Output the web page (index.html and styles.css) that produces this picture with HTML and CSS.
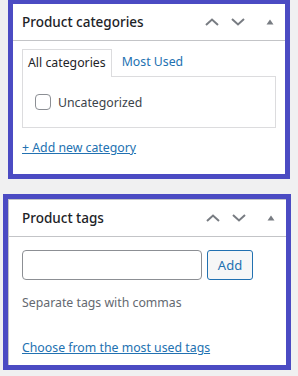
FILE: index.html
```html
<!DOCTYPE html>
<html lang="en">
<head>
  <meta charset="UTF-8" />
  <title>Product boxes</title>
  <link rel="stylesheet" href="styles.css">
</head>
<body>
  <div class="postbox box-categories">
    <div class="postbox-header">
      <h2>Product categories</h2>
      <div class="handle-actions">
        <svg class="icon" width="14" height="8" viewBox="0 0 14 8"><path d="M1 7 L7 1.5 L13 7" fill="none" stroke="#787c82" stroke-width="2"/></svg>
        <svg class="icon" width="14" height="8" viewBox="0 0 14 8"><path d="M1 1 L7 6.5 L13 1" fill="none" stroke="#787c82" stroke-width="2"/></svg>
        <svg class="icon toggle" width="8" height="6" viewBox="0 0 8 6"><path d="M0.5 5.5 L4 0.5 L7.5 5.5 Z" fill="#787c82"/></svg>
      </div>
    </div>
    <div class="inside">
      <ul class="category-tabs">
        <li class="tab active">All categories</li>
        <li class="tab"><a href="#">Most Used</a></li>
      </ul>
      <div class="tabs-panel">
        <label class="cat-item"><span class="checkbox"></span>Uncategorized</label>
      </div>
      <a class="add-link" href="#">+ Add new category</a>
    </div>
  </div>

  <div class="postbox box-tags">
    <div class="box-inner">
      <div class="postbox-header">
        <h2>Product tags</h2>
        <div class="handle-actions">
          <svg class="icon" width="14" height="8" viewBox="0 0 14 8"><path d="M1 7 L7 1.5 L13 7" fill="none" stroke="#787c82" stroke-width="2"/></svg>
          <svg class="icon" width="14" height="8" viewBox="0 0 14 8"><path d="M1 1 L7 6.5 L13 1" fill="none" stroke="#787c82" stroke-width="2"/></svg>
          <svg class="icon toggle" width="8" height="6" viewBox="0 0 8 6"><path d="M0.5 5.5 L4 0.5 L7.5 5.5 Z" fill="#787c82"/></svg>
        </div>
      </div>
      <div class="inside">
        <div class="tag-form">
          <input type="text" class="tag-input">
          <button class="tag-add">Add</button>
        </div>
        <p class="howto">Separate tags with commas</p>
        <a class="add-link" href="#">Choose from the most used tags</a>
      </div>
    </div>
  </div>
</body>
</html>
```

FILE: styles.css
```css
body {
  margin: 0;
  background: #f0f0f1;
  font-family: "Noto Sans", "Open Sans", sans-serif;
  font-size: 12.3px;
  color: #1d2327;
}
.postbox {
  background: #fff;
  border: 5px solid #4b4bc3;
  box-sizing: border-box;
}
.box-categories {
  width: 282px;
  margin: -1px 0 0 8px;
}
.box-tags {
  width: 288px;
  margin: 15px 0 0 3px;
}
.box-inner {
  border-top: 1px solid #c3c4c7;
  border-left: 1px solid #c3c4c7;
}
.postbox-header {
  display: flex;
  align-items: center;
  justify-content: space-between;
  height: 36px;
  border-bottom: 1px solid #c3c4c7;
  padding: 0 0 0 9px;
}
.box-tags .postbox-header {
  padding-left: 13px;
}
.postbox-header h2 {
  margin: 0;
  font-size: 13.5px;
  font-weight: 500;
  color: #1d2327;
}
.handle-actions {
  display: flex;
  align-items: center;
  gap: 12px;
  padding-right: 11px;
}
.icon {
  display: block;
}
.handle-actions .toggle {
  margin-left: 9px;
}
.inside {
  padding: 8px 9px 16px 9px;
}
.box-tags .inside {
  padding: 13px 13px 7px 13px;
}
.category-tabs {
  display: flex;
  list-style: none;
  margin: 0 0 -1px 0;
  padding: 0;
  height: 28px;
}
.tab {
  padding: 0 5px;
  line-height: 26px;
}
.tab a {
  color: #2271b1;
  text-decoration: none;
}
.tab.active {
  background: #fff;
  border: 1px solid #dcdcde;
  border-bottom: none;
  margin-right: 5px;
  position: relative;
  z-index: 1;
}
.tabs-panel {
  height: 52px;
  box-sizing: border-box;
  border: 1px solid #dcdcde;
  padding: 0 12px;
  display: flex;
  align-items: center;
}
.cat-item {
  display: flex;
  align-items: center;
  gap: 7px;
  color: #3c434a;
}
.checkbox {
  width: 16px;
  height: 16px;
  box-sizing: border-box;
  border: 1px solid #8c8f94;
  border-radius: 4px;
  background: #fff;
}
.add-link {
  display: block;
  color: #2271b1;
  text-decoration: underline;
  line-height: 20px;
  margin-top: 10px;
}
.tag-form {
  display: flex;
  gap: 5px;
}
.tag-input {
  width: 180px;
  height: 30px;
  box-sizing: border-box;
  border: 1px solid #8c8f94;
  border-radius: 4px;
  margin: 0;
}
.tag-add {
  height: 30px;
  width: 46px;
  padding: 0;
  font-family: inherit;
  font-size: 13px;
  color: #2271b1;
  background: #f6f7f7;
  border: 1px solid #2271b1;
  border-radius: 3px;
}
.howto {
  margin: 13px 0 0 0;
  line-height: 20px;
  color: #646970;
}
.box-tags .add-link {
  margin-top: 25px;
}
```
